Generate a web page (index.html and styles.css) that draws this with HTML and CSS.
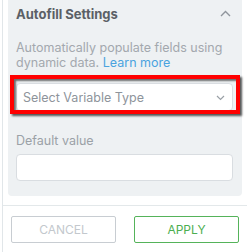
FILE: index.html
```html
<!DOCTYPE html>
<html>
<head>
<meta charset="utf-8">
<link rel="stylesheet" href="styles.css">
</head>
<body>
<div class="wrap">
  <section class="panel">
    <div class="panel-head">
      <span class="title">Autofill Settings</span>
      <svg class="chev-up" width="11" height="7" viewBox="0 0 11 7"><path d="M1 6 L5.5 1.5 L10 6" fill="none" stroke="#8f959c" stroke-width="1.4"/></svg>
    </div>
    <p class="desc">Automatically populate fields using dynamic data. <span class="link">Learn more</span></p>
    <div class="select-wrap">
      <div class="select">
        <span>Select Variable Type</span>
        <svg class="chev-down" width="9" height="6" viewBox="0 0 9 6"><path d="M1 1 L4.5 4.5 L8 1" fill="none" stroke="#9aa0a6" stroke-width="1.2"/></svg>
      </div>
      <div class="highlight"></div>
    </div>
    <div class="label">Default value</div>
    <div class="input"></div>
  </section>
  <footer class="footer">
    <button class="btn cancel">CANCEL</button>
    <button class="btn apply">APPLY</button>
  </footer>
</div>
</body>
</html>
```
FILE: styles.css
```css
html, body { margin: 0; padding: 0; background: #fff; }
body { width: 247px; height: 252px; overflow: hidden; padding-left: 2px; box-sizing: border-box; font-family: Inter, Roboto, "Liberation Sans", sans-serif; }
.wrap { border-left: 1px solid #e1e6e9; height: 252px; }
.panel { margin-left: 5px; width: 234px; box-sizing: border-box; background: #eef1f3; padding: 0 9px 15px 8px; border-radius: 0 0 4px 4px; }
.panel-head { height: 28px; display: flex; align-items: center; justify-content: space-between; }
.title { font-size: 13px; font-weight: 700; color: #5b6066; }
.chev-up { margin-right: 2px; margin-top: -2px; }
.desc { margin: 12px 0 0; font-size: 12.5px; line-height: 15px; color: #a3a8ae; }
.link { color: #4aa3df; }
.select-wrap { position: relative; margin-top: 13px; }
.select { height: 28px; box-sizing: border-box; background: #fff; border: 1px solid #d9dde1; border-radius: 4px; display: flex; align-items: center; justify-content: space-between; padding: 0 7px 0 6px; font-size: 12.5px; color: #8e949b; }
.chev-down { margin-top: 1px; }
.highlight { position: absolute; left: -6px; right: -7px; top: -8px; bottom: -3px; border: 4px solid #ff0000; box-shadow: 2px 2px 2px rgba(0,0,0,0.65), inset 2px 2px 2px rgba(0,0,0,0.55); pointer-events: none; }
.label { margin-top: 22px; font-size: 12.5px; line-height: 15px; color: #9ba1a7; }
.input { margin-top: 6px; height: 27px; box-sizing: border-box; background: #fff; border: 1px solid #d9dde1; border-radius: 4px; }
.footer { margin-top: 9px; border-top: 1px solid #e3e8ea; padding: 10px 0 0 8px; display: flex; gap: 18px; }
.btn { width: 105px; height: 27px; box-sizing: border-box; background: #fff; border-radius: 2px; font-family: Inter, Roboto, "Liberation Sans", sans-serif; font-size: 12px; padding: 0; }
.cancel { border: 1px solid #c8cdd2; color: #c3c8cd; }
.apply { border: 1px solid #55b35a; color: #4cae50; }
```
